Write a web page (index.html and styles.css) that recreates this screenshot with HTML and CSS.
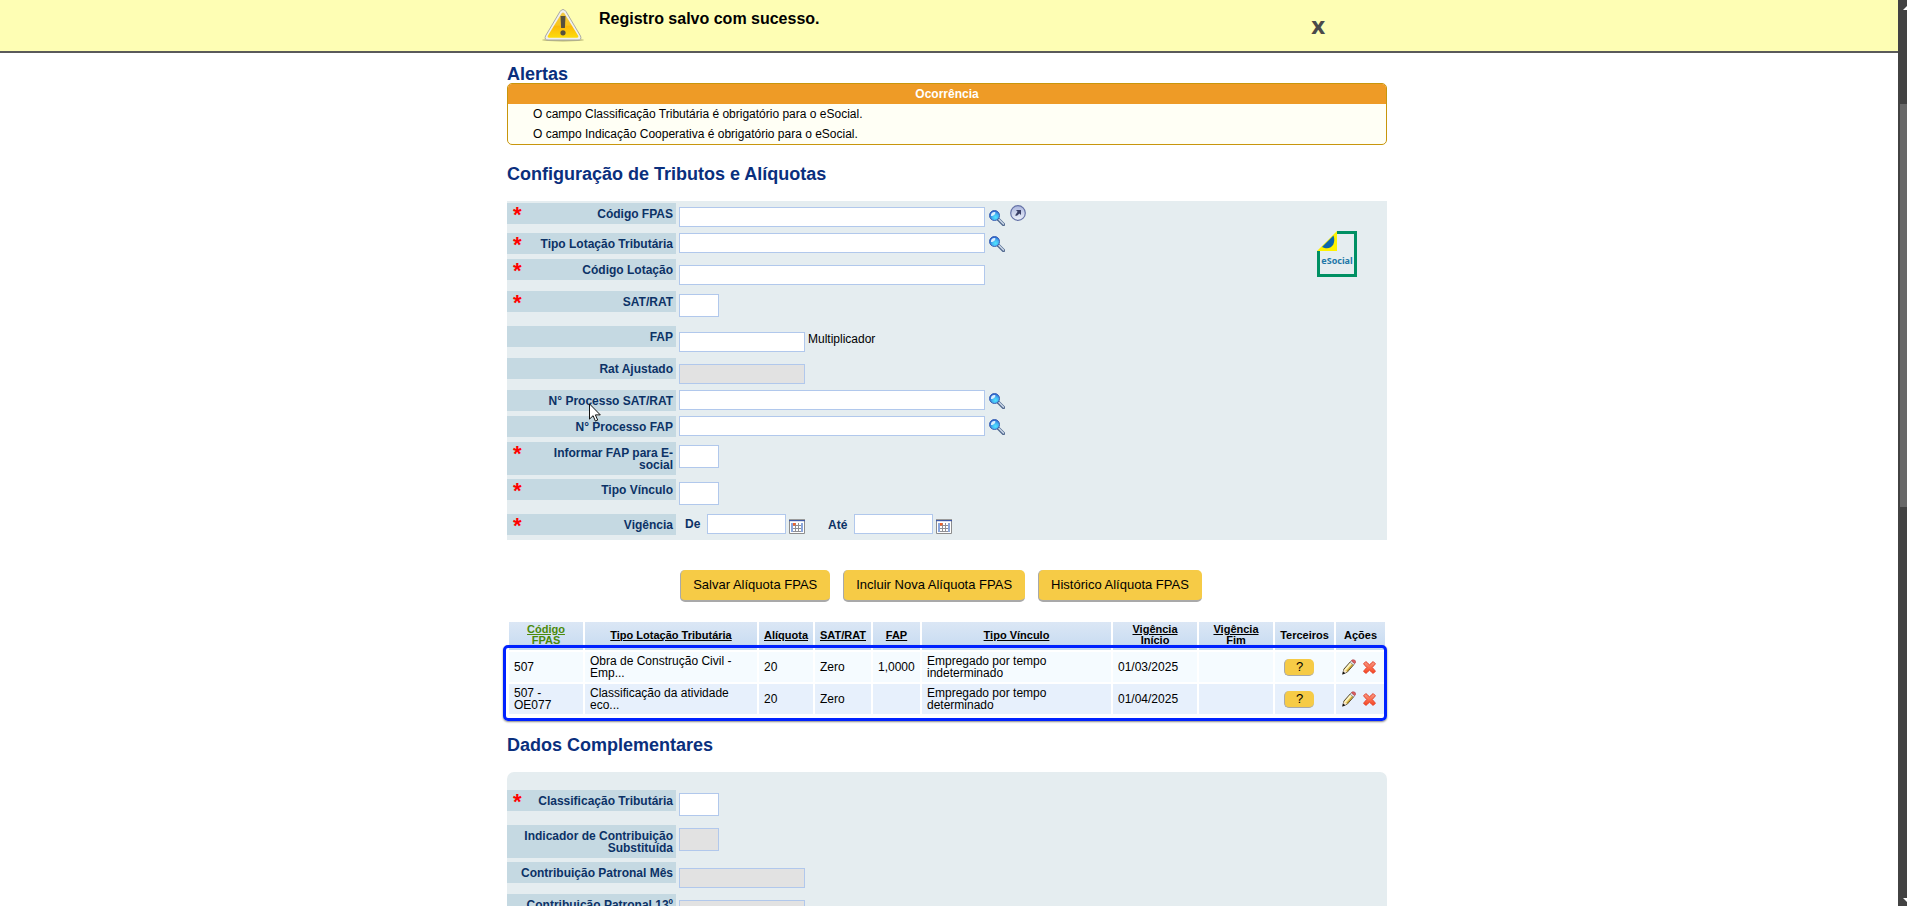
FILE: index.html
```html
<!DOCTYPE html>
<html lang="pt-BR">
<head>
    <meta charset="UTF-8">
    <meta name="viewport" content="width=device-width, initial-scale=1.0">
    <title>Configuração de Tributos e Alíquotas</title>
    <link rel="stylesheet" href="styles.css">
</head>
<body>
    <!-- Ícones reutilizados -->
    <svg class="sprite" width="0" height="0" aria-hidden="true">
        <defs>
            <radialGradient id="lente" cx="60%" cy="68%" r="65%">
                <stop offset="0" stop-color="#4fe6ff"/>
                <stop offset="0.5" stop-color="#45b4f2"/>
                <stop offset="1" stop-color="#2a5fce"/>
            </radialGradient>
            <linearGradient id="seta" x1="0" y1="0" x2="0" y2="1">
                <stop offset="0" stop-color="#a9b4dc"/>
                <stop offset="1" stop-color="#eef2fb"/>
            </linearGradient>
            <linearGradient id="amarelo" x1="0" y1="0" x2="0" y2="1">
                <stop offset="0" stop-color="#f2c94a"/>
                <stop offset="0.5" stop-color="#f9c61c"/>
                <stop offset="0.55" stop-color="#fbb90a"/>
                <stop offset="1" stop-color="#fddc0c"/>
            </linearGradient>
            <linearGradient id="vermelho" x1="0" y1="0" x2="0" y2="1">
                <stop offset="0" stop-color="#f99a85"/>
                <stop offset="1" stop-color="#f8431c"/>
            </linearGradient>
        </defs>
        <symbol id="lupa" viewBox="0 0 16 16">
            <path d="M9 9l5.500 5.500" stroke="#51698f" stroke-width="3.200" stroke-linecap="round"/>
            <path d="M10 9.600l4.500 4.500" stroke="#cfdaea" stroke-width="1.400" stroke-linecap="round"/>
            <circle cx="5.500" cy="5.500" r="5" fill="url(#lente)" stroke="#3c62b4"/>
            <path d="M2 6c-.4-2.600 1.400-4.300 4.200-4C7 3.800 4.800 6 2 6z" fill="#d9efff"/>
        </symbol>
        <symbol id="calendario" viewBox="0 0 16 15">
            <path d="M.5 1h15v13.500H.5z" fill="#fff" stroke="#8c8c8c"/>
            <path d="M0 0h16v1H0z" fill="#9a9a9a"/>
            <path d="M0 1h16v1.200H0z" fill="#3f5aa6"/>
            <path d="M2 4h12v9H2z" fill="#8f8f94"/>
            <path d="M2 4h2v9H2zM12 4h2v9h-2z" fill="#8aa6dc"/>
            <path d="M7 4h2v2H7zM10 4h2v2h-2zM4 7h2v2H4zM7 7h2v2H7zM10 7h2v2h-2zM4 10h2v2H4zM7 10h2v2H7zM10 10h2v2h-2z" fill="#fff"/>
            <path d="M4 4h2.500v2.500H4z" fill="#f4632a"/>
        </symbol>
        <symbol id="lapis" viewBox="0 0 14 16">
            <path d="M.8 14.800l1-4.600 6.600-7.400 3.400 2.800-6.600 7.600z" fill="#f3e08a" stroke="#4a4030" stroke-width="1"/>
            <path d="M3 10.800l6-6.800" stroke="#fff8cc" stroke-width="1.200"/>
            <path d="M4.800 12.400l6.200-7.200" stroke="#c09a28" stroke-width="1.200"/>
            <path d="M1.800 10.400l3.200 2.600-4.300 2z" fill="#f7e6cc"/>
            <path d="M.3 15.700l.9-3.200 2.100 1.800z" fill="#111"/>
            <path d="M8 3.200l3.400 2.900 1.300-1.500-3.400-2.900z" fill="#e6e8ee" stroke="#777" stroke-width=".6"/>
            <path d="M9.300 1.700C10.300-.4 14.600 1.300 13.700 3.300l-1 1.300z" fill="#dc5a5e" stroke="#a8444a" stroke-width=".6"/>
        </symbol>
        <symbol id="excluir" viewBox="0 0 12 12">
            <path d="M2.600.5L6 3.500 9.400.5l2.100 2.100L8.500 6l3 3.400-2.100 2.100-3.400-3-3.400 3L.5 9.400l3-3.400-3-3.400z" fill="url(#vermelho)" stroke="#e2402a" stroke-width=".9"/>
        </symbol>
    </svg>

    <div class="janela">
        <div class="conteudo">
            <div class="mensagem" role="alert">
                <div class="mensagem-interna">
                    <svg class="aviso" viewBox="0 0 42 33" aria-hidden="true">
                        <ellipse cx="21" cy="31" rx="21" ry="1.500" fill="#b9b777"/>
                        <path d="M18 2.500Q21-1.500 24 2.500L38.500 27q1.500 4-2.500 4H6q-4 0-2.500-4z" fill="#f1f1ee" stroke="#a9a9a4" stroke-width="1"/>
                        <path d="M19.500 4.500q1.500-2 3 0L36.300 27q.6 1.700-1.300 1.700H7q-1.900 0-1.300-1.700z" fill="url(#amarelo)"/>
                        <path d="M18.500 7h5l-.6 12h-3.800z" fill="#55503e"/>
                        <circle cx="21" cy="23.800" r="2.600" fill="#55503e"/>
                    </svg>
                    <p>Registro salvo com sucesso.</p>
                    <button type="button" class="fechar" aria-label="Fechar">x</button>
                </div>
            </div>

            <main class="container">
                <h2>Alertas</h2>
                <div class="ocorrencias">
                    <h3>Ocorrência</h3>
                    <ul>
                        <li>O campo Classificação Tributária é obrigatório para o eSocial.</li>
                        <li>O campo Indicação Cooperativa é obrigatório para o eSocial.</li>
                    </ul>
                </div>

                <h2 class="titulo">Configuração de Tributos e Alíquotas</h2>
                <form class="painel">
                    <div class="campos">
                        <div class="linha primeira">
                            <label for="fpas"><b>*</b><span>Código FPAS</span></label>
                            <input type="text" id="fpas" class="longo">
                            <button type="button" class="icone" aria-label="Pesquisar"><svg width="16" height="16"><use href="#lupa"/></svg></button>
                            <a href="#" class="abrir" aria-label="Abrir cadastro">
                                <svg width="16" height="16" viewBox="0 0 16 16">
                                    <circle cx="8" cy="8" r="7.300" fill="url(#seta)" stroke="#6673a8" stroke-width="1.200"/>
                                    <path d="M6 5h5v5L9.400 8.600 7 10.800 5 10.600l2.600-3.800z" fill="#3a3f66"/>
                                </svg>
                            </a>
                        </div>
                        <div class="linha">
                            <label for="lotacao"><b>*</b><span>Tipo Lotação Tributária</span></label>
                            <input type="text" id="lotacao" class="longo">
                            <button type="button" class="icone" aria-label="Pesquisar"><svg width="16" height="16"><use href="#lupa"/></svg></button>
                        </div>
                        <div class="linha texto">
                            <label for="codigo"><b>*</b><span>Código Lotação</span></label>
                            <input type="text" id="codigo" class="longo">
                        </div>
                        <div class="linha opcao">
                            <label for="sat"><b>*</b><span>SAT/RAT</span></label>
                            <input type="text" id="sat" class="curto">
                        </div>
                        <div class="linha texto">
                            <label for="fap"><span>FAP</span></label>
                            <input type="text" id="fap" class="medio">
                            <span class="nota">Multiplicador</span>
                        </div>
                        <div class="linha texto">
                            <label for="rat"><span>Rat Ajustado</span></label>
                            <input type="text" id="rat" class="medio" disabled>
                        </div>
                        <div class="linha">
                            <label for="processo-sat"><span>N° Processo SAT/RAT</span>
                                <svg class="cursor" viewBox="0 0 12 19" aria-hidden="true"><path d="M.5.900v15.200l3.600-3.400 2.300 5.400 2.300-1-2.300-5.200h4.900z" fill="#fff" stroke="#111"/></svg>
                            </label>
                            <input type="text" id="processo-sat" class="longo">
                            <button type="button" class="icone" aria-label="Pesquisar"><svg width="16" height="16"><use href="#lupa"/></svg></button>
                        </div>
                        <div class="linha">
                            <label for="processo-fap"><span>N° Processo FAP</span></label>
                            <input type="text" id="processo-fap" class="longo">
                            <button type="button" class="icone" aria-label="Pesquisar"><svg width="16" height="16"><use href="#lupa"/></svg></button>
                        </div>
                        <div class="linha opcao">
                            <label for="informar"><b>*</b><span>Informar FAP para E-social</span></label>
                            <input type="text" id="informar" class="curto">
                        </div>
                        <div class="linha opcao">
                            <label for="vinculo"><b>*</b><span>Tipo Vínculo</span></label>
                            <input type="text" id="vinculo" class="curto">
                        </div>
                        <div class="linha">
                            <label for="de"><b>*</b><span>Vigência</span></label>
                            <div class="periodo">
                                <label for="de" class="rotulo">De</label>
                                <input type="text" id="de" class="data">
                                <button type="button" class="icone calendario" aria-label="Calendário"><svg width="16" height="15"><use href="#calendario"/></svg></button>
                                <label for="ate" class="rotulo ate">Até</label>
                                <input type="text" id="ate" class="data">
                                <button type="button" class="icone calendario" aria-label="Calendário"><svg width="16" height="15"><use href="#calendario"/></svg></button>
                            </div>
                        </div>
                    </div>
                    <svg class="logo" viewBox="0 0 40 46" role="img" aria-label="eSocial">
                        <path d="M20 1.500h18.500v43h-37V20" fill="none" stroke="#009063" stroke-width="3"/>
                        <path d="M20 0v20H0z" fill="#fff200"/>
                        <path d="M16.500 4.500C19.500 13 13.500 20.500 5 16z" fill="#0b65ad"/>
                        <text x="20" y="33" text-anchor="middle" class="logo-texto">eSocial</text>
                    </svg>
                </form>

                <div class="acoes">
                    <button type="button" class="botao">Salvar Alíquota FPAS</button>
                    <button type="button" class="botao">Incluir Nova Alíquota FPAS</button>
                    <button type="button" class="botao">Histórico Alíquota FPAS</button>
                </div>

                <div class="lista">
                    <table>
                        <colgroup>
                            <col class="c-codigo"><col class="c-lotacao"><col class="c-aliquota"><col class="c-sat"><col class="c-fap">
                            <col><col class="c-inicio"><col class="c-fim"><col class="c-terceiros"><col class="c-acoes">
                        </colgroup>
                        <thead>
                            <tr>
                                <th><a href="#" class="ordenado">Código FPAS</a></th>
                                <th><a href="#">Tipo Lotação Tributária</a></th>
                                <th><a href="#">Alíquota</a></th>
                                <th><a href="#">SAT/RAT</a></th>
                                <th><a href="#">FAP</a></th>
                                <th><a href="#">Tipo Vínculo</a></th>
                                <th><a href="#">Vigência<br>Início</a></th>
                                <th><a href="#">Vigência<br>Fim</a></th>
                                <th>Terceiros</th>
                                <th>Ações</th>
                            </tr>
                        </thead>
                        <tbody>
                            <tr>
                                <td>507</td>
                                <td>Obra de Construção Civil -<br>Emp...</td>
                                <td>20</td>
                                <td>Zero</td>
                                <td>1,0000</td>
                                <td>Empregado por tempo<br>indeterminado</td>
                                <td>01/03/2025</td>
                                <td></td>
                                <td><button type="button" class="botao ajuda">?</button></td>
                                <td>
                                    <div class="comandos">
                                        <button type="button" class="icone" aria-label="Editar"><svg width="14" height="16"><use href="#lapis"/></svg></button>
                                        <button type="button" class="icone" aria-label="Excluir"><svg width="13" height="13"><use href="#excluir"/></svg></button>
                                    </div>
                                </td>
                            </tr>
                            <tr>
                                <td>507 -<br>OE077</td>
                                <td>Classificação da atividade<br>eco...</td>
                                <td>20</td>
                                <td>Zero</td>
                                <td></td>
                                <td>Empregado por tempo<br>determinado</td>
                                <td>01/04/2025</td>
                                <td></td>
                                <td><button type="button" class="botao ajuda">?</button></td>
                                <td>
                                    <div class="comandos">
                                        <button type="button" class="icone" aria-label="Editar"><svg width="14" height="16"><use href="#lapis"/></svg></button>
                                        <button type="button" class="icone" aria-label="Excluir"><svg width="13" height="13"><use href="#excluir"/></svg></button>
                                    </div>
                                </td>
                            </tr>
                        </tbody>
                    </table>
                    <div class="destaque"></div>
                </div>

                <h2 class="titulo">Dados Complementares</h2>
                <form class="painel complementar">
                    <div class="campos">
                        <div class="linha opcao">
                            <label for="classificacao"><b>*</b><span>Classificação Tributária</span></label>
                            <input type="text" id="classificacao" class="curto">
                        </div>
                        <div class="linha opcao">
                            <label for="indicador"><span>Indicador de Contribuição Substituída</span></label>
                            <input type="text" id="indicador" class="curto" disabled>
                        </div>
                        <div class="linha texto">
                            <label for="patronal-mes"><span>Contribuição Patronal Mês</span></label>
                            <input type="text" id="patronal-mes" class="medio" disabled>
                        </div>
                        <div class="linha texto">
                            <label for="patronal-13"><span>Contribuição Patronal 13º</span></label>
                            <input type="text" id="patronal-13" class="medio" disabled>
                        </div>
                    </div>
                </form>
            </main>
        </div>

        <div class="rolagem" aria-hidden="true">
            <svg class="ponta" viewBox="0 0 4 4"><path d="M0 4l4-4v4z" fill="#fff"/></svg>
            <div class="polegar"></div>
            <svg class="ponta baixo" viewBox="0 0 4 4"><path d="M0 0h4v4z" fill="#fff"/></svg>
        </div>
    </div>
</body>
</html>
```

FILE: styles.css
```css
* {
    box-sizing: border-box;
}
body {
    margin: 0;
    font-family: "Liberation Sans", Arial, sans-serif;
    font-size: 12px;
    line-height: 12px;
    color: #000;
    background-color: #fff;
}
.sprite {
    position: absolute;
}
svg {
    display: block;
}
button {
    font-family: inherit;
    cursor: pointer;
}
.janela {
    display: flex;
    height: 100vh;
}
.conteudo {
    flex: 1;
    overflow: hidden;
}

/* Mensagem do topo */
.mensagem {
    height: 53px;
    padding-right: 4px;
    background-color: #fefeb4;
    border-bottom: 2px solid #5a5a5a;
}
.mensagem-interna {
    display: flex;
    align-items: flex-start;
    max-width: 880px;
    margin: 0 auto;
    padding: 9px 62px 0 35px;
}
.aviso {
    width: 42px;
    height: 33px;
    margin-right: 15px;
}
.mensagem p {
    flex: 1;
    margin: 0;
    font-size: 16px;
    line-height: 20px;
    font-weight: bold;
}
.fechar {
    margin-top: 4px;
    padding: 0;
    border: none;
    background: none;
    font-family: "Open Sans", sans-serif;
    font-size: 24px;
    line-height: 24px;
    font-weight: bold;
    color: #4a4a4a;
}

.container {
    max-width: 884px;
    margin: 0 auto;
    padding: 12px 4px 0 0;
}
h2 {
    margin: 0;
    font-size: 18px;
    line-height: 18px;
    color: #0a2f7d;
}
.titulo {
    margin: 20px 0 18px;
}

/* Alertas */
.ocorrencias {
    border: 1px solid #c8960c;
    border-radius: 5px;
    background-color: #fffff5;
    overflow: hidden;
}
.ocorrencias h3 {
    margin: 0;
    font-size: 12px;
    line-height: 20px;
    text-align: center;
    color: #fff;
    background-color: #ee9b26;
}
.ocorrencias ul {
    margin: 0;
    padding: 0 25px;
    list-style: none;
    line-height: 20px;
}

/* Formulário */
.painel {
    display: flex;
    align-items: flex-start;
    padding: 2px 30px 0 0;
    background-color: #e5edf0;
}
.complementar {
    padding-top: 18px;
    border-radius: 7px 7px 0 0;
}
.campos {
    flex: 1;
}
.linha {
    display: flex;
    align-items: flex-start;
    min-height: 26px;
    padding-bottom: 4px;
}
.primeira {
    min-height: 30px;
}
.texto {
    min-height: 32px;
}
.opcao {
    min-height: 35px;
}
.linha > label {
    display: flex;
    position: relative;
    width: 169px;
    margin-right: 3px;
    padding: 5px 3px 4px 6px;
    font-weight: bold;
    text-align: right;
    color: #0c3266;
    background-color: #c5d9e2;
}
.linha > label span {
    flex: 1;
}
.linha > label b {
    width: 12px;
    height: 12px;
    font-size: 22px;
    line-height: 13px;
    text-align: left;
    color: #f00;
}
input {
    height: 20px;
    padding: 0 3px;
    border: 1px solid #b1c8ec;
    background-color: #fff;
    font-family: inherit;
    font-size: 12px;
}
input:disabled {
    background-color: #e2e2e2;
}
.longo {
    width: 306px;
}
.medio {
    width: 126px;
}
.data {
    width: 79px;
}
.curto {
    width: 40px;
    height: 23px;
}
.primeira input {
    margin-top: 4px;
}
.texto input {
    margin-top: 6px;
}
.opcao input {
    margin-top: 3px;
}
.nota {
    margin: 7px 0 0 3px;
}
.icone {
    padding: 0;
    border: none;
    background: none;
}
.linha .icone {
    margin: 3px 0 0 4px;
}
.primeira .icone {
    margin-top: 7px;
}
.abrir {
    margin: 2px 0 0 5px;
}
.periodo {
    display: flex;
    align-items: flex-start;
    padding-left: 6px;
}
.periodo .calendario {
    margin: 5px 0 0 3px;
}
.rotulo {
    width: 22px;
    padding-top: 4px;
    font-weight: bold;
    color: #0c3266;
}
.ate {
    width: 26px;
    margin-left: 23px;
    padding-top: 5px;
}
.logo {
    width: 40px;
    height: 46px;
    margin-top: 28px;
}
.logo-texto {
    font-family: "Noto Sans", sans-serif;
    font-size: 9px;
    font-weight: bold;
    fill: #2277a8;
}
.cursor {
    position: absolute;
    left: 82px;
    top: 13px;
    width: 12px;
    height: 19px;
    z-index: 1;
}

/* Botões */
.acoes {
    display: flex;
    justify-content: center;
    gap: 13px;
    padding: 30px 12px 18px 0;
}
.botao {
    height: 32px;
    padding: 0 13px 2px 12px;
    border: 0 solid #a9a9a9;
    border-width: 0 0 2px 1px;
    border-radius: 5px;
    background-color: #f6cb46;
    font-size: 13px;
    color: #000;
}

/* Lista de alíquotas */
.lista {
    position: relative;
}
table {
    width: 100%;
    table-layout: fixed;
    border-spacing: 2px;
}
th, td {
    height: 30px;
    padding: 3px 5px;
}
th {
    height: 28px;
    padding: 2px 3px 4px;
    font-size: 11px;
    line-height: 11px;
    background: linear-gradient(#dbe7f5, #c6daf1);
}
th a {
    color: #000;
}
th .ordenado {
    display: block;
    padding: 0 15px;
    color: #4b8a0a;
}
td {
    background-color: #f5fbff;
}
tbody tr:nth-child(even) td {
    background-color: #e7f0fc;
}
.c-codigo, .c-fim {
    width: 74px;
}
.c-lotacao {
    width: 172px;
}
.c-aliquota {
    width: 54px;
}
.c-sat {
    width: 56px;
}
.c-fap {
    width: 47px;
}
.c-inicio {
    width: 84px;
}
.c-terceiros {
    width: 59px;
}
.c-acoes {
    width: 49px;
}
.ajuda {
    display: block;
    width: 30px;
    height: 17px;
    margin-left: 4px;
    padding: 0;
    border-width: 0 0 1px 1px;
}
.comandos {
    display: flex;
    align-items: center;
    gap: 7px;
    padding-left: 1px;
}
.destaque {
    position: absolute;
    top: 25px;
    right: 0;
    bottom: -5px;
    left: -4px;
    border: 3px solid #0022ff;
    border-radius: 5px;
    box-shadow: 0 1px 2px #888;
    pointer-events: none;
}

/* Barra de rolagem */
.rolagem {
    display: grid;
    grid-template-rows: 104fr 403fr 399fr;
    width: 9px;
    padding-left: 2px;
    background-color: #424242;
}
.polegar {
    background-color: #686868;
}
.ponta {
    width: 4px;
    height: 4px;
    margin: 6px 0 0 3px;
}
.baixo {
    align-self: end;
    margin-bottom: 4px;
}
```
